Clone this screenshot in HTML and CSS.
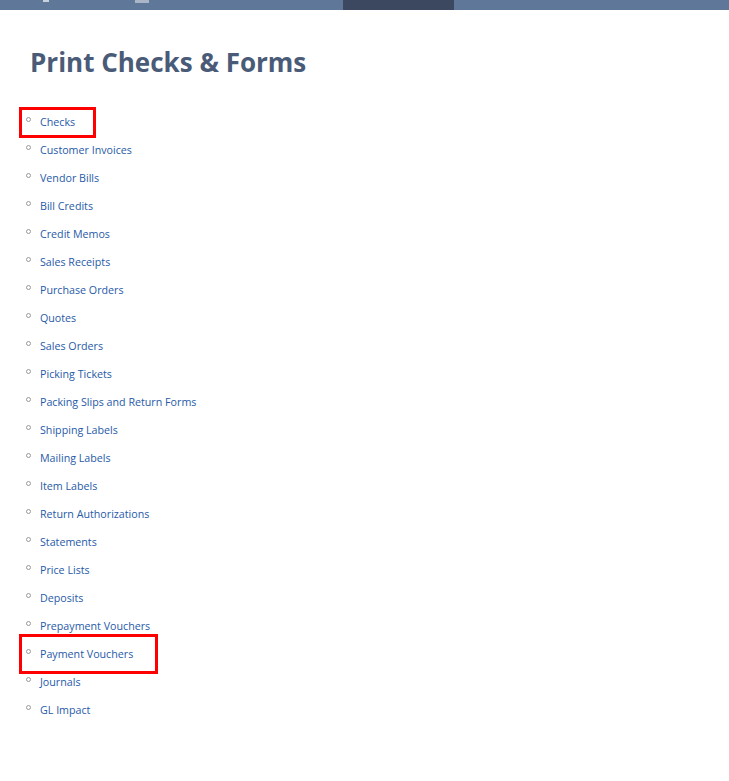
FILE: index.html
```html
<!DOCTYPE html>
<html lang="en">
<head>
    <meta charset="UTF-8">
    <title>Print Checks &amp; Forms</title>
    <link rel="stylesheet" href="styles.css">
</head>
<body>
    <div class="topbar">
        <span class="tick tick-a"></span>
        <span class="tick tick-b"></span>
        <span class="tab-active"></span>
    </div>

    <div class="page">
        <h1>Print Checks &amp; Forms</h1>
        <ul class="forms">
            <li class="marked mark-checks"><a href="#">Checks</a></li>
            <li><a href="#">Customer Invoices</a></li>
            <li><a href="#">Vendor Bills</a></li>
            <li><a href="#">Bill Credits</a></li>
            <li><a href="#">Credit Memos</a></li>
            <li><a href="#">Sales Receipts</a></li>
            <li><a href="#">Purchase Orders</a></li>
            <li><a href="#">Quotes</a></li>
            <li><a href="#">Sales Orders</a></li>
            <li><a href="#">Picking Tickets</a></li>
            <li><a href="#">Packing Slips and Return Forms</a></li>
            <li><a href="#">Shipping Labels</a></li>
            <li><a href="#">Mailing Labels</a></li>
            <li><a href="#">Item Labels</a></li>
            <li><a href="#">Return Authorizations</a></li>
            <li><a href="#">Statements</a></li>
            <li><a href="#">Price Lists</a></li>
            <li><a href="#">Deposits</a></li>
            <li><a href="#">Prepayment Vouchers</a></li>
            <li class="marked mark-payment"><a href="#">Payment Vouchers</a></li>
            <li><a href="#">Journals</a></li>
            <li><a href="#">GL Impact</a></li>
        </ul>
    </div>
</body>
</html>
```

FILE: styles.css
```css
body {
    margin: 0;
    font-family: "Open Sans", Arial, sans-serif;
    background: #fff;
    color: #333;
}

.topbar {
    height: 10px;
    background: #5f7799;
    display: flex;
    align-items: flex-start;
}

.tick {
    height: 2px;
    background: #c9d1dc;
}

.tick-a {
    width: 6px;
    margin-left: 43px;
}

.tick-b {
    width: 14px;
    height: 3px;
    margin-left: 86px;
    background: #aab6c7;
}

.tab-active {
    width: 111px;
    height: 10px;
    margin-left: 194px;
    background: #3b4860;
}

.page {
    padding: 0 0 40px 0;
}

h1 {
    margin: 34px 0 0 30px;
    font-size: 26px;
    line-height: 36px;
    font-weight: 700;
    color: #4a5b78;
}

.forms {
    list-style: none;
    margin: 28px 0 0 0;
    padding: 0 0 0 26px;
}

.forms li {
    position: relative;
    height: 28px;
    line-height: 28px;
    font-size: 10.7px;
    display: flex;
    align-items: flex-start;
}

.forms li::before {
    content: "";
    width: 3px;
    height: 3px;
    border: 1px solid #9a9a9a;
    border-radius: 50%;
    margin: 9px 9px 0 0;
}

.forms a {
    color: #275aa8;
    text-decoration: none;
}

/* red annotation boxes drawn over the list */
.marked::after {
    content: "";
    position: absolute;
    border: 3px solid #f00;
    pointer-events: none;
}

.mark-checks::after {
    left: -7px;
    top: -1px;
    width: 71px;
    height: 25px;
}

.mark-payment::after {
    left: -7px;
    top: -6px;
    width: 133px;
    height: 34px;
}
```
